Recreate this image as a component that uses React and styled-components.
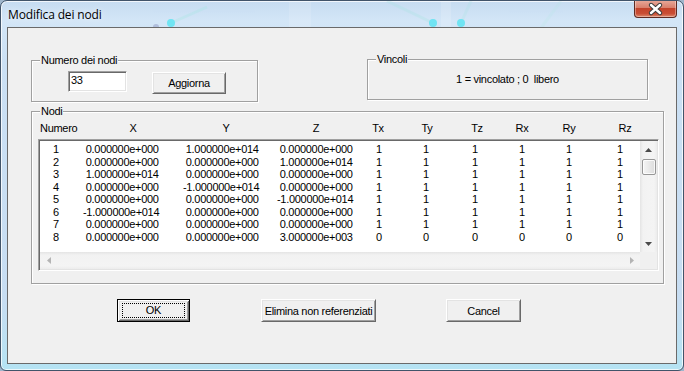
import React from "react";
import styled, { createGlobalStyle } from "styled-components";

const GlobalStyle = createGlobalStyle`
  html, body {
    margin: 0;
    padding: 0;
    background: #9fb6cc;
  }
  * {
    box-sizing: border-box;
  }
`;

const nodes = [
  ["1", " 0.000000e+000", " 1.000000e+014", " 0.000000e+000", 1],
  ["2", " 0.000000e+000", " 0.000000e+000", " 1.000000e+014", 1],
  ["3", " 1.000000e+014", " 0.000000e+000", " 0.000000e+000", 1],
  ["4", " 0.000000e+000", "-1.000000e+014", " 0.000000e+000", 1],
  ["5", " 0.000000e+000", " 0.000000e+000", "-1.000000e+014", 1],
  ["6", "-1.000000e+014", " 0.000000e+000", " 0.000000e+000", 1],
  ["7", " 0.000000e+000", " 0.000000e+000", " 0.000000e+000", 1],
  ["8", " 0.000000e+000", " 0.000000e+000", " 3.000000e+003", 0]
];

// header cells: [label, width, align]
const headers = [
  ["Numero", 60, "left"],
  ["X", 66, "center"],
  ["Y", 120, "center"],
  ["Z", 60, "center"],
  ["Tx", 64, "center"],
  ["Ty", 34, "center"],
  ["Tz", 66, "center"],
  ["Rx", 24, "center"],
  ["Ry", 70, "center"],
  ["Rz", 42, "center"]
];

export default function App() {
  return (
    <>
      <GlobalStyle />
      <Window>
        <Glass viewBox="0 0 684 371" preserveAspectRatio="none">
          <rect x="288" y="0" width="22" height="27" fill="#ffffff" opacity="0.25" />
          <rect x="440" y="0" width="10" height="27" fill="#ffffff" opacity="0.3" />
          <line x1="170" y1="22" x2="206" y2="6" stroke="#9fe6e0" strokeWidth="3" opacity="0.5" />
          <line x1="432" y1="22" x2="386" y2="0" stroke="#a5e4e2" strokeWidth="3" opacity="0.5" />
          <line x1="460" y1="22" x2="470" y2="0" stroke="#a5e4e2" strokeWidth="3" opacity="0.4" />
          <line x1="540" y1="27" x2="560" y2="0" stroke="#b2e8e2" strokeWidth="3" opacity="0.35" />
          <circle cx="155" cy="26" r="3" fill="#6a6fa8" opacity="0.6" />
          <circle cx="170" cy="22" r="4" fill="#1fe3f0" />
          <circle cx="432" cy="22" r="4" fill="#1fe3f0" />
          <circle cx="460" cy="22" r="4" fill="#1fe3f0" />
        </Glass>
        <TitleBar>
          <Title>Modifica dei nodi</Title>
          <CloseButton>
            <svg width="41" height="16" viewBox="0 0 41 16">
              <path d="M16 4 L25 12 M25 4 L16 12" stroke="#3c3c3c" strokeWidth="4.4" strokeLinecap="round" />
              <path d="M16 4 L25 12 M25 4 L16 12" stroke="#ffffff" strokeWidth="2.4" strokeLinecap="round" />
            </svg>
          </CloseButton>
        </TitleBar>
        <Client>
          <TopRow>
            <Group $w={227} $h={48} $mt={1}>
              <Legend>Numero dei nodi</Legend>
              <CountRow>
                <Edit>33</Edit>
                <Button $w={74} $h={22} $ml={25} $mt={1}>Aggiorna</Button>
              </CountRow>
            </Group>
            <Group $w={281} $h={47} $mt={0} $ml={109}>
              <Legend>Vincoli</Legend>
              <Note>1 = vincolato ; 0  libero</Note>
            </Group>
          </TopRow>

          <Group $w={633} $h={179} $mt={3}>
            <Legend>Nodi</Legend>
            <NodesBody>
              <HeaderRow>
                {headers.map(([label, w, align]) => (
                  <HeadCell key={label} $w={w} $align={align}>
                    {label}
                  </HeadCell>
                ))}
              </HeaderRow>
              <ListBox>
                <Rows>
                  {nodes.map(([n, x, y, z, v]) => (
                    <Row key={n}>
                      <span>{n}</span>
                      <span>{x}</span>
                      <span>{y}</span>
                      <span>{z}</span>
                      <span>{v}</span>
                      <span>{v}</span>
                      <span>{v}</span>
                      <span>{v}</span>
                      <span>{v}</span>
                      <span>{v}</span>
                    </Row>
                  ))}
                </Rows>
                <VScroll>
                  <ArrowBox>
                    <svg width="7" height="4" viewBox="0 0 7 4">
                      <path d="M0 4 L3.5 0 L7 4 Z" fill="#4a4a4a" />
                    </svg>
                  </ArrowBox>
                  <Thumb />
                  <Track />
                  <ArrowBox>
                    <svg width="7" height="4" viewBox="0 0 7 4">
                      <path d="M0 0 L7 0 L3.5 4 Z" fill="#4a4a4a" />
                    </svg>
                  </ArrowBox>
                </VScroll>
                <HScroll>
                  <ArrowBox>
                    <svg width="4" height="7" viewBox="0 0 4 7">
                      <path d="M4 0 L0 3.5 L4 7 Z" fill="#b4b4b4" />
                    </svg>
                  </ArrowBox>
                  <ArrowBox>
                    <svg width="4" height="7" viewBox="0 0 4 7">
                      <path d="M0 0 L4 3.5 L0 7 Z" fill="#b4b4b4" />
                    </svg>
                  </ArrowBox>
                </HScroll>
                <Corner />
              </ListBox>
            </NodesBody>
          </Group>

          <ButtonRow>
            <Button $w={73} $h={23} $ml={109} $default>
              <Focus>OK</Focus>
            </Button>
            <Button $w={115} $h={23} $ml={71}>Elimina non referenziati</Button>
            <Button $w={75} $h={23} $ml={70}>Cancel</Button>
          </ButtonRow>
        </Client>
      </Window>
    </>
  );
}

const Window = styled.div`
  position: relative;
  width: 684px;
  height: 371px;
  display: flex;
  flex-direction: column;
  padding: 0 6px 6px 6px;
  border: 1px solid #41546a;
  border-radius: 7px 7px 6px 6px;
  overflow: hidden;
  background: linear-gradient(
    to bottom,
    #c6dcf1 0px,
    #d3e6f7 20px,
    #cbe0f4 60px,
    #c7ddf2 300px,
    #b5e3f3 368px
  );
  box-shadow: inset 0 0 0 1px rgba(255, 255, 255, 0.75);
`;

const Glass = styled.svg`
  position: absolute;
  left: 0;
  top: 0;
  width: 684px;
  height: 371px;
  pointer-events: none;
  opacity: 0.55;
`;

const TitleBar = styled.div`
  position: relative;
  height: 26px;
  display: flex;
  align-items: flex-start;
  padding-left: 1px;
`;

const Title = styled.div`
  align-self: center;
  margin-top: 1px;
  font-family: "Open Sans", "Noto Sans", sans-serif;
  font-size: 12px;
  letter-spacing: -0.15px;
  color: #000;
  text-shadow: 0 0 6px rgba(255, 255, 255, 0.9);
`;

const CloseButton = styled.div`
  margin-left: auto;
  margin-top: -1px;
  width: 43px;
  height: 18px;
  border: 1px solid #5e2a22;
  border-top: none;
  border-radius: 0 0 4px 4px;
  display: flex;
  align-items: center;
  justify-content: center;
  background: linear-gradient(
    to bottom,
    #e9ab9c 0%,
    #d9806d 45%,
    #c3432b 50%,
    #c94e35 80%,
    #dc8a6e 100%
  );
  box-shadow: inset 0 0 0 1px rgba(255, 255, 255, 0.35);
`;

const Client = styled.div`
  position: relative;
  flex: 1;
  display: flex;
  flex-direction: column;
  border: 1px solid #6a6a6a;
  background: #f0f0f0;
  font-family: "Liberation Sans", Arial, sans-serif;
  font-size: 11px;
  letter-spacing: -0.3px;
  color: #000;
`;

const TopRow = styled.div`
  display: flex;
  align-items: flex-start;
  margin-top: 25px;
`;

const Group = styled.fieldset`
  width: ${(p) => p.$w}px;
  height: ${(p) => p.$h}px;
  margin: ${(p) => p.$mt ?? 0}px 0 0 ${(p) => p.$ml ?? 23}px;
  padding: 0;
  min-width: 0;
  border: 1px solid #a0a0a0;
  box-shadow: 1px 1px 0 #ffffff, inset 1px 1px 0 #ffffff;
  display: flex;
  flex-direction: column;
`;

const Legend = styled.legend`
  margin-left: 8px;
  padding: 0 1px;
  line-height: 13px;
  background: #f0f0f0;
`;

const CountRow = styled.div`
  display: flex;
  align-items: flex-start;
  padding: 4px 0 0 36px;
`;

const Edit = styled.div`
  width: 59px;
  height: 21px;
  padding: 2px 0 0 2px;
  line-height: 13px;
  background: #ffffff;
  border: 1px solid;
  border-color: #a0a0a0 #ffffff #ffffff #a0a0a0;
  box-shadow: inset 1px 1px 0 #696969, inset -1px -1px 0 #e3e3e3;
`;

const Button = styled.div`
  width: ${(p) => p.$w}px;
  height: ${(p) => p.$h}px;
  margin-left: ${(p) => p.$ml || 0}px;
  margin-top: ${(p) => p.$mt || 0}px;
  display: flex;
  align-items: center;
  justify-content: center;
  white-space: nowrap;
  line-height: 13px;
  padding-top: 1px;
  background: #f0f0f0;
  border: 1px solid;
  border-color: ${(p) => (p.$default ? "#000000" : "#ffffff #696969 #696969 #ffffff")};
  box-shadow: ${(p) =>
    p.$default
      ? "inset 1px 1px 0 #ffffff, inset -1px -1px 0 #696969, inset 2px 2px 0 #e3e3e3, inset -2px -2px 0 #a0a0a0"
      : "inset 1px 1px 0 #e3e3e3, inset -1px -1px 0 #a0a0a0"};
`;

const Focus = styled.div`
  width: 63px;
  height: 15px;
  margin-top: -1px;
  display: flex;
  align-items: center;
  justify-content: center;
  border: 1px dotted #000;
`;

const Note = styled.div`
  padding-top: 7px;
  text-align: center;
  white-space: pre;
  line-height: 13px;
`;

const NodesBody = styled.div`
  display: flex;
  flex-direction: column;
  padding: 4px 0 0 0;
`;

const HeaderRow = styled.div`
  display: flex;
  padding-left: 8px;
  line-height: 13px;
`;

const HeadCell = styled.div`
  width: ${(p) => p.$w}px;
  text-align: ${(p) => p.$align};
  flex-shrink: 0;
`;

const ListBox = styled.div`
  margin: 4px 0 0 6px;
  width: 621px;
  height: 132px;
  display: grid;
  grid-template-columns: 1fr 17px;
  grid-template-rows: 1fr 17px;
  background: #ffffff;
  border: 1px solid;
  border-color: #a0a0a0 #ffffff #ffffff #a0a0a0;
  box-shadow: inset 1px 1px 0 #696969, inset -1px -1px 0 #e3e3e3;
  padding: 1px;
`;

const Rows = styled.div`
  padding: 2px 0 0 13px;
  overflow: hidden;
`;

const Row = styled.div`
  display: grid;
  grid-template-columns: 30px 100px 94px 99px 47px 49px 47px 47px 51px 1fr;
  height: 12.57px;
  line-height: 12.57px;
  white-space: pre;
`;

const VScroll = styled.div`
  display: flex;
  flex-direction: column;
  background: linear-gradient(to right, #e4e4e4 0, #f2f2f2 3px, #f4f4f4 14px, #ececec 17px);
`;

const ArrowBox = styled.div`
  width: 17px;
  height: 17px;
  display: flex;
  align-items: center;
  justify-content: center;
  flex-shrink: 0;
`;

const Thumb = styled.div`
  margin: 1px 1px 0 2px;
  height: 16px;
  flex-shrink: 0;
  border: 1px solid #979797;
  border-radius: 2px;
  background: linear-gradient(to right, #f6f6f6 0, #e9e9e9 50%, #dcdcdc 100%);
  box-shadow: inset 0 0 0 1px rgba(255, 255, 255, 0.8);
`;

const Track = styled.div`
  flex: 1;
`;

const HScroll = styled.div`
  display: flex;
  justify-content: space-between;
  background: linear-gradient(to bottom, #e4e4e4 0, #f2f2f2 3px, #f4f4f4 14px, #ececec 17px);
`;

const Corner = styled.div`
  background: #f0f0f0;
`;

const ButtonRow = styled.div`
  display: flex;
  margin-top: 15px;
`;
